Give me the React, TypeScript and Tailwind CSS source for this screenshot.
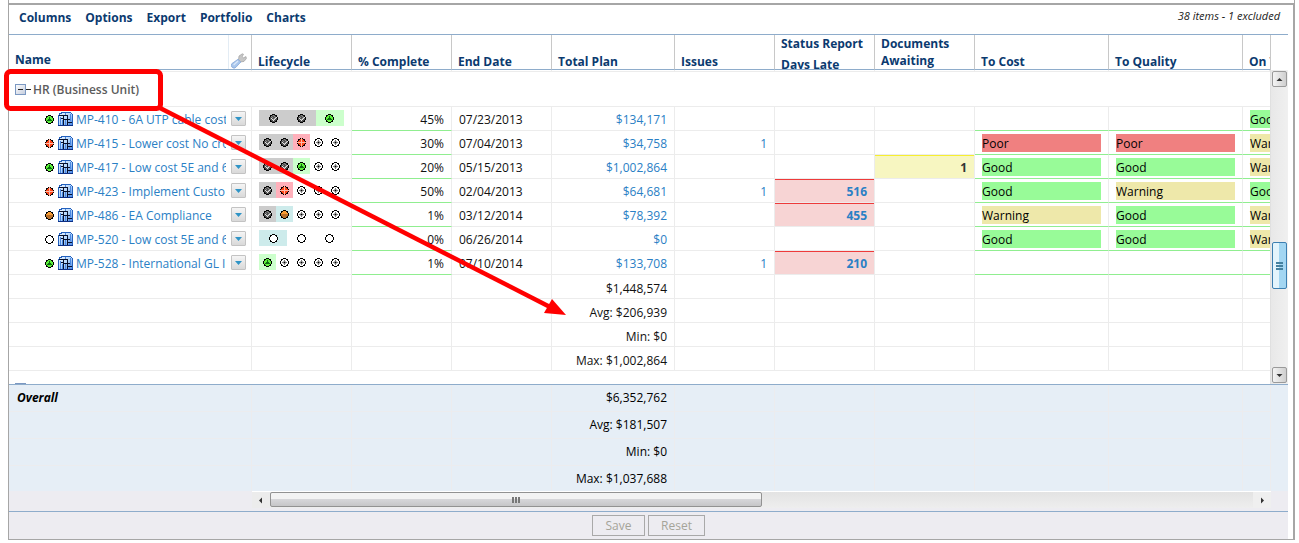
import React from "react";

type Phase = "done" | "green" | "red" | "orange" | "empty" | "todo";
type Rating = "Good" | "Warning" | "Poor" | "";

interface Item {
  status: Phase;
  name: string;
  phases: Phase[];
  complete: string;
  end: string;
  plan: string;
  issues?: string;
  late?: string;
  docs?: string;
  cost: Rating;
  quality: Rating;
  time: Rating;
}

const items: Item[] = [
  { status: "green", name: "MP-410 - 6A UTP cable cost", phases: ["done", "done", "green"], complete: "45%", end: "07/23/2013", plan: "$134,171", cost: "", quality: "", time: "Good" },
  { status: "red", name: "MP-415 - Lower cost No cross", phases: ["done", "done", "red", "todo", "todo"], complete: "30%", end: "07/04/2013", plan: "$34,758", issues: "1", cost: "Poor", quality: "Poor", time: "Warning" },
  { status: "green", name: "MP-417 - Low cost 5E and 6A", phases: ["done", "done", "green", "todo", "todo"], complete: "20%", end: "05/15/2013", plan: "$1,002,864", docs: "1", cost: "Good", quality: "Good", time: "Warning" },
  { status: "red", name: "MP-423 - Implement Custo", phases: ["done", "red", "todo", "todo", "todo"], complete: "50%", end: "02/04/2013", plan: "$64,681", issues: "1", late: "516", cost: "Good", quality: "Warning", time: "Good" },
  { status: "orange", name: "MP-486 - EA Compliance", phases: ["done", "orange", "todo", "todo", "todo"], complete: "1%", end: "03/12/2014", plan: "$78,392", late: "455", cost: "Warning", quality: "Good", time: "Warning" },
  { status: "empty", name: "MP-520 - Low cost 5E and 6A", phases: ["empty", "empty", "empty"], complete: "0%", end: "06/26/2014", plan: "$0", cost: "Good", quality: "Good", time: "Warning" },
  { status: "green", name: "MP-528 - International GL I", phases: ["green", "todo", "todo", "todo", "todo"], complete: "1%", end: "07/10/2014", plan: "$133,708", issues: "1", late: "210", cost: "", quality: "", time: "" },
];

const groupTotals = ["$1,448,574", "Avg: $206,939", "Min: $0", "Max: $1,002,864"];
const overallTotals = ["$6,352,762", "Avg: $181,507", "Min: $0", "Max: $1,037,688"];

const ratingColor = { Good: "bg-[#98fb98]", Warning: "bg-[#eee8aa]", Poor: "bg-[#f08080]" };

const cell = "h-6 overflow-hidden whitespace-nowrap border-b border-r border-[#ececec] p-0 align-top leading-6";
const greenCell = "h-6 overflow-hidden whitespace-nowrap border-b border-r border-b-[#90ee90] border-r-[#ececec] p-0 align-top leading-6";
const line = "block h-[23px] leading-[25px]";

function Columns() {
  return (
    <colgroup>
      <col className="w-[243px]" />
      <col className="w-[100px]" />
      <col className="w-[100px]" />
      <col className="w-[100px]" />
      <col className="w-[123px]" />
      <col className="w-[100px]" />
      <col className="w-[100px]" />
      <col className="w-[100px]" />
      <col className="w-[134px]" />
      <col className="w-[134px]" />
      <col />
    </colgroup>
  );
}

function PhaseIcon({ kind }: { kind: Phase }) {
  const fill = { done: "#505050", green: "#5cf03a", red: "#ff4518", orange: "#f99c33", empty: "#ffffff", todo: "#ffffff" }[kind];
  return (
    <svg width="9" height="9" viewBox="0 0 9 9" className="block shrink-0" aria-hidden="true" shapeRendering="crispEdges">
      <path d="M3 1h3v1h1v1h1v3H7v1H6v1H3V7H2V6H1V3h1V2h1z" fill={fill} />
      <path d="M3 0h3v1H3zM3 8h3v1H3zM0 3h1v3H0zM8 3h1v3H8zM1 1h2v1H2v1H1zM6 1h2v2H7V2H6zM1 6h1v1h1v1H1zM7 6h1v2H6V7h1z" fill="#000" />
      {kind === "done" && (
        <>
          <path d="M2 2h1v1H2zM4 1h1v1H4zM3 3h1v1H3zM5 2h1v1H5z" fill="#8f8f8f" />
          <path d="M2 4h1v1H2zM3 5h1v1H3zM4 6h1v1H4zM5 5h1v1H5zM6 4h1v1H6zM7 3h1v1H7z" fill="#e4e4e4" />
          <path d="M4 5h1v1H4zM5 4h1v1H5zM6 3h1v1H6z" fill="#9c9c9c" />
        </>
      )}
      {kind === "green" && <path d="M4 2h1v2h1v1h1v1H2V5h1V4h1z" fill="#0a6a10" />}
      {kind === "red" && <path d="M4 0h1v4h4v1H5v4H4V5H0V4h4z" fill="#ffb9a8" />}
      {kind === "orange" && <path d="M1 4h7v2H7v1H6v1H3V7H2V6H1z" fill="#b8702a" />}
      {kind === "todo" && (
        <>
          <path d="M3 3h3v3H3z" fill="#b4b4b4" />
          <path d="M4 2h1v2h2v1H5v2H4V5H2V4h2z" fill="#777" />
          <path d="M4 4h1v1H4z" fill="#000" />
        </>
      )}
    </svg>
  );
}

function ProjectIcon() {
  return (
    <svg width="15" height="14" viewBox="0 0 15 14" className="block shrink-0" aria-hidden="true" shapeRendering="crispEdges">
      <defs>
        <linearGradient id="sheet" x1="0" y1="0" x2="1" y2="1">
          <stop offset="0" stopColor="#eef6ff" />
          <stop offset="0.5" stopColor="#b4d6fc" />
          <stop offset="1" stopColor="#4f8ae6" />
        </linearGradient>
      </defs>
      <path d="M0 3h1V1h2V0h10v1h1v1h1v12H0z" fill="#2360bd" />
      <path d="M1 3h1V2h2V1h9v1h1v11H1z" fill="url(#sheet)" />
      <path d="M2 5h1v8H2zM4 8h1v5H4zM7 8h1v5H7zM7 1h1v2H7zM12 2h1v7h-1zM11 11h1v2h-1z" fill="#4a88e0" />
      <path d="M1 3h9v1H1zM5 4h1v9H5zM3 6h2v1H3zM9 4h1v9H9zM6 7h6v1H6zM10 10h4v1h-4z" fill="#07102c" />
      <path d="M0 13h15v1H0z" fill="#0c2f86" />
    </svg>
  );
}

function WrenchIcon() {
  return (
    <svg width="16" height="16" viewBox="0 0 16 16" className="block" aria-hidden="true">
      <path d="M7.500 7 8 3 11.300.8l1.200.5-1.300 2.200 1.300 1.300L15 3.600l.4 2L13 8.400l-3.800.6z" fill="#c6c6c6" stroke="#a0a0a0" strokeWidth=".7" />
      <path d="M7 6.300 9.800 9 5 14.200a2.700 2.700 0 0 1-4-3.700z" fill="#a9c6ec" stroke="#86a8d8" strokeWidth=".8" />
      <path d="M7 8 2.600 12" stroke="#dbe8f9" strokeWidth="1.200" />
    </svg>
  );
}

function Toggle({ label }: { label: string }) {
  return (
    <button aria-label={label} className="flex shrink-0 items-center">
      <svg width="16" height="11" viewBox="0 0 16 11" className="block" aria-hidden="true" shapeRendering="crispEdges">
        <defs>
          <linearGradient id="box" x1="0" y1="0" x2="1" y2="1">
            <stop offset="0" stopColor="#fff" />
            <stop offset="1" stopColor="#c3cbdc" />
          </linearGradient>
        </defs>
        <rect x=".5" y=".5" width="10" height="10" fill="url(#box)" stroke="#7b98c2" />
        <path d="M3 5h5v1H3zM11 5h5v1h-5z" fill="#222" />
      </svg>
    </button>
  );
}

function Lifecycle({ phases }: { phases: Phase[] }) {
  return (
    <div className="ml-[7px] mt-[3px] flex h-4 w-[85px]">
      {phases.map((p, i) => {
        const bg =
          p === "done" ? "bg-[#cccccc]" : p === "green" ? "bg-[#ccffcc]" : p === "red" ? "bg-[#ffb0bb]" : p === "orange" || (p === "empty" && i === 0) ? "bg-[#cdebeb]" : "";
        return (
          <div key={i} className={`flex flex-1 items-center justify-center ${bg}`}>
            <PhaseIcon kind={p} />
          </div>
        );
      })}
    </div>
  );
}

function RatingCell({ value, last }: { value: Rating; last?: boolean }) {
  return (
    <td className={last ? `${greenCell} border-r-0` : greenCell}>
      {value && <div className={`ml-[7px] mt-[3px] h-[18px] w-[119px] leading-[19px] text-black ${ratingColor[value]}`}>{value}</div>}
    </td>
  );
}

function ItemRow({ item }: { item: Item }) {
  return (
    <tr>
      <td className={cell}>
        <div className="flex h-[23px] items-center pl-9 pr-[5px]">
          <span className="pt-px">
            <PhaseIcon kind={item.status} />
          </span>
          <span className="ml-1 pt-px">
            <ProjectIcon />
          </span>
          <a href="#" className="ml-[3px] mr-[5px] min-w-0 flex-1 overflow-hidden pt-0.5 leading-[23px] text-[#2a80c5]">
            {item.name}
          </a>
          <button aria-label={`Actions for ${item.name}`} className="flex size-[15px] shrink-0 items-center justify-center rounded-[1px] border border-[#c3c3c3] bg-linear-to-b from-[#f5f5f5] to-[#d9d9d9]">
            <svg width="7" height="4" viewBox="0 0 7 4" aria-hidden="true">
              <path d="M0 0h7L3.500 4z" fill="#2f94c6" />
            </svg>
          </button>
        </div>
      </td>
      <td className={cell}>
        <Lifecycle phases={item.phases} />
      </td>
      <td className={greenCell}>
        <span className={`${line} pr-[7px] text-right`}>{item.complete}</span>
      </td>
      <td className={cell}>
        <span className={`${line} pl-[7px]`}>{item.end}</span>
      </td>
      <td className={cell}>
        <a href="#" className={`${line} pr-[7px] text-right text-[#2a80c5]`}>
          {item.plan}
        </a>
      </td>
      <td className={cell}>
        {item.issues && (
          <a href="#" className={`${line} pr-[7px] text-right text-[#2a80c5]`}>
            {item.issues}
          </a>
        )}
      </td>
      <td className={cell}>
        {item.late && <div className="h-[23px] border-t border-[#ee3a3a] bg-[#f7d4d4] pr-[7px] text-right font-bold leading-[23px] text-[#2a80c5]">{item.late}</div>}
      </td>
      <td className={cell}>
        {item.docs && <div className="h-[23px] border-t border-[#f7ee2f] bg-[#f7f6c1] pr-[7px] text-right font-bold leading-[23px] text-[#333]">{item.docs}</div>}
      </td>
      <RatingCell value={item.cost} />
      <RatingCell value={item.quality} />
      <RatingCell value={item.time} last />
    </tr>
  );
}

function TotalsRow({ label, value, className, lead }: { label: string; value: string; className: string; lead?: string }) {
  return (
    <tr>
      {Array.from({ length: 11 }, (_, i) => (
        <td key={i} className={`${className} ${i === 10 ? "border-r-0" : "border-r"} ${i === 4 ? "pr-[7px] text-right" : ""} ${i === 0 && lead ? "pl-2 font-bold italic" : ""}`} aria-label={i === 4 ? label : undefined}>
          {i === 4 ? value : i === 0 ? lead : null}
        </td>
      ))}
    </tr>
  );
}

const headings = ["Name", "Lifecycle", "% Complete", "End Date", "Total Plan", "Issues", "Status Report", "Documents", "To Cost", "To Quality", "On Time"];

function Heading({ text }: { text: string }) {
  if (text === "Name") {
    return (
      <div className="flex h-[34px] items-end justify-between pl-1.5">
        <span className="pb-px">Name</span>
        <button aria-label="Configure columns" className="flex h-full w-[23px] items-end justify-start border-l border-[#e3ecf4] pl-0.5">
          <WrenchIcon />
        </button>
      </div>
    );
  }
  if (text === "Status Report") {
    return (
      <div className="h-[34px] overflow-hidden pl-1.5 pt-px">
        <div>Status Report</div>
        <div className="mt-[5px]">Days Late</div>
      </div>
    );
  }
  if (text === "Documents") {
    return (
      <div className="h-[34px] overflow-hidden pl-1.5 leading-[17px]">
        Documents
        <br />
        Awaiting
      </div>
    );
  }
  return <div className="h-[34px] overflow-hidden pl-1.5 pt-[19px]">{text}</div>;
}

function ScrollArrow({ d, label, className }: { d: string; label: string; className: string }) {
  return (
    <button aria-label={label} className={`flex shrink-0 items-center justify-center ${className}`}>
      <svg width="7" height="7" viewBox="0 0 7 7" aria-hidden="true">
        <path d={d} fill="#333" />
      </svg>
    </button>
  );
}

export default function App() {
  return (
    <div className="relative bg-white font-['Open_Sans','Noto_Sans',sans-serif] text-[12px] leading-4 text-[#111]">
      <div className="ml-2 mr-1 h-[3px] border-x border-[#a6a6a6]" />
      <main className="ml-2 mr-1 border-b border-l border-r-2 border-t-2 border-[#a6a6a6] pr-[5px]">
        <header className="flex h-[30px] items-start justify-between border-b border-[#8eaccb] pl-2.5 pr-2">
          <nav className="flex gap-3.5 pt-[5px] font-bold text-[#0b3a6f]">
            {["Columns", "Options", "Export", "Portfolio", "Charts"].map((m) => (
              <button key={m}>{m}</button>
            ))}
          </nav>
          <p className="pt-[3px] text-[11px] italic text-[#222]">38 items - 1 excluded</p>
        </header>

        <div className="mr-[17px] border-r border-[#c8c8c8]">
          <table className="w-full table-fixed border-separate border-spacing-0 text-left font-bold text-[#0b3a6f]">
            <Columns />
            <thead>
              <tr>
                {headings.map((h, i) => (
                  <th key={h} className={`overflow-hidden whitespace-nowrap border-b border-b-[#8eaccb] border-r-[#c8c8c8] p-0 font-bold ${i === 10 ? "" : "border-r"}`}>
                    <Heading text={h} />
                  </th>
                ))}
              </tr>
            </thead>
          </table>
        </div>

        <div className="flex h-[314px]">
          <div className="min-w-0 flex-1 overflow-hidden border-r border-[#e0e0e0]">
            <table className="w-full table-fixed border-separate border-spacing-0">
              <Columns />
              <tbody>
                <tr aria-hidden="true">
                  {headings.map((h) => (
                    <td key={h} className="h-0.5 border-b border-r border-[#ececec] p-0" />
                  ))}
                </tr>
                <tr>
                  <td colSpan={11} className="h-[35px] border-b border-[#ececec] p-0">
                    <div className="flex items-center pl-1.5 pt-px">
                      <Toggle label="Collapse HR" />
                      <span className="ml-0.5 pt-px font-semibold text-[#5c5c5c]">HR (Business Unit)</span>
                    </div>
                  </td>
                </tr>
                {items.map((item) => (
                  <ItemRow key={item.name} item={item} />
                ))}
                {groupTotals.map((v) => (
                  <TotalsRow key={v} label={`Group total plan ${v}`} value={v} className="h-6 border-b border-[#ececec] p-0 pt-[5px] leading-4" />
                ))}
                <tr>
                  <td colSpan={11} className="h-[35px] p-0 pl-1.5">
                    <Toggle label="Collapse next group" />
                  </td>
                </tr>
              </tbody>
            </table>
          </div>
          <div className="flex w-[17px] shrink-0 flex-col bg-linear-to-r from-[#e8e8e8] to-[#f0f0f0] px-px py-px">
            <ScrollArrow label="Scroll up" d="M3.500 2 6.500 5h-6z" className="h-4 rounded-[2px] border border-[#9a9a9a] bg-linear-to-r from-[#f4f4f4] to-[#cfcfcf]" />
            <div className="flex-1" />
            <button aria-label="Scroll position" className="flex h-[47px] items-center justify-center rounded-[2px] border border-[#3c7fb1] bg-linear-to-r from-[#e3f4fc] from-50% to-[#a3d6f2] to-50%">
              <span className="flex w-[7px] flex-col gap-px">
                <span className="h-0.5 bg-[#44809f]" />
                <span className="h-0.5 bg-[#44809f]" />
                <span className="h-0.5 bg-[#44809f]" />
              </span>
            </button>
            <div className="h-[78px]" />
            <ScrollArrow label="Scroll down" d="M.5 2h6L3.500 5z" className="h-4 rounded-[2px] border border-[#9a9a9a] bg-linear-to-r from-[#f4f4f4] to-[#cfcfcf]" />
          </div>
        </div>

        <section className="border-t border-[#8eaccb] bg-[#e6eef6]">
          <div className="mr-[17px] border-r border-[#ececee]">
            <table className="w-full table-fixed border-separate border-spacing-0 text-black">
              <Columns />
              <tbody>
                {overallTotals.map((v, i) => (
                  <TotalsRow
                    key={v}
                    label={`Overall total plan ${v}`}
                    value={v}
                    lead={i === 0 ? "Overall" : undefined}
                    className={i === 3 ? "h-[25px] border-[#ececee] p-0" : "h-[27px] border-b border-[#ececee] p-0"}
                  />
                ))}
              </tbody>
            </table>
          </div>
        </section>

        <div className="h-5 bg-[#edecf1] pl-[243px] pr-[17px]">
          <div className="flex h-[17px] border-t border-white bg-linear-to-b from-[#e3e3e3] to-[#eeeeee]">
            <ScrollArrow label="Scroll left" d="M1 3.500 4 .5v6z" className="w-[18px] bg-[#ececec]" />
            <button aria-label="Horizontal scroll position" className="flex h-[15px] w-[492px] items-center justify-center gap-px rounded-[2px] border border-[#929292] bg-linear-to-b from-[#f3f3f3] from-45% via-[#d6d6d9] via-50% to-[#c6c6c8]">
              <span className="h-1.5 w-0.5 bg-[#777]" />
              <span className="h-1.5 w-0.5 bg-[#777]" />
              <span className="h-1.5 w-0.5 bg-[#777]" />
            </button>
            <div className="flex-1" />
            <ScrollArrow label="Scroll right" d="M2 .5 5 3.500 2 6.500z" className="w-[18px] bg-[#efefef]" />
          </div>
        </div>

        <footer className="flex h-7 items-start justify-center gap-[3px] border-t border-[#8eaccb] bg-[#edecf1] pt-[3px]">
          <button disabled className="h-[21px] w-[53px] border border-[#a9a9a9] leading-[19px] text-[#a5a499]">
            Save
          </button>
          <button disabled className="h-[21px] w-[57px] border border-[#a9a9a9] leading-[19px] text-[#a5a499]">
            Reset
          </button>
        </footer>
      </main>

      <svg width="570" height="320" viewBox="0 0 570 320" className="pointer-events-none absolute left-0 top-0" aria-hidden="true">
        <rect x="6.500" y="71.500" width="154" height="37" rx="4" fill="none" stroke="#ff0000" strokeWidth="5" />
        <path d="M160 108 550 307" stroke="#ff0000" strokeWidth="4.500" />
        <path d="M552 299 566 315 544 313z" fill="#ff0000" />
      </svg>
    </div>
  );
}
